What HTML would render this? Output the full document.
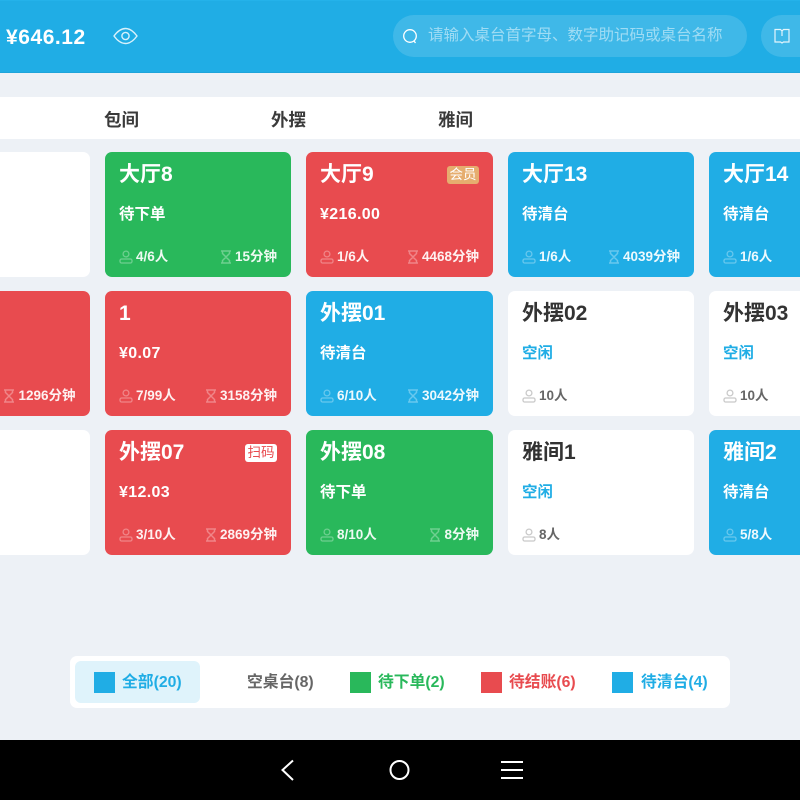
<!DOCTYPE html>
<html lang="zh">
<head>
<meta charset="utf-8">
<title>桌台</title>
<style>
html,body{margin:0;padding:0;background:#edf1f6}
body{width:800px;height:800px;overflow:hidden;position:relative;font-family:"Liberation Sans","Noto Sans CJK SC",sans-serif}
.abs{position:absolute;white-space:nowrap}
.hdr{left:0;top:0;width:800px;height:73px;background:#20ade5;border-bottom:1px solid #1ea4da;border-top:1px solid #24b2ea;box-sizing:border-box}
.pill{background:rgba(255,255,255,.14);border-radius:21px;height:42px;top:15px}
.tabs{left:0;top:97px;width:800px;height:42px;background:#fff}
.tab{top:98px;line-height:44px;font-size:17.500px;font-weight:bold;color:#3a3a3a}
.card{position:absolute;width:186px;height:125px;border-radius:7px;color:#fff;box-sizing:border-box;overflow:hidden}
.g{background:#29b85b}.r{background:#e84b4f}.b{background:#20ade5}
.w{background:#fff;color:#333}
.lc{left:0;width:89.500px;border-radius:0 7px 7px 0}
.rc{left:709px;width:91px;border-radius:7px 0 0 7px}
.c3{left:306px;width:187px}
.t{position:absolute;left:14px;top:8px;line-height:30px;font-size:21px;font-weight:bold;white-space:nowrap}
.s{position:absolute;left:14px;top:50px;line-height:25px;font-size:15.500px;font-weight:bold;white-space:nowrap}
.m{font-size:16px;letter-spacing:.35px}
.w .s{color:#20ade5}
.f{position:absolute;left:14px;right:14px;top:95px;height:20px;line-height:20px;font-size:13.500px;font-weight:bold;display:flex;justify-content:space-between;white-space:nowrap;color:rgba(255,255,255,.92)}
.w .f{color:#666}
.f span{display:inline-flex;align-items:center}
.f svg{margin-right:3px;opacity:.35}
.tag{position:absolute;right:14px;top:14px;height:18px;line-height:18px;width:32px;text-align:center;border-radius:3px;font-size:13.500px}
.leg{left:70px;top:656px;width:660px;height:52px;background:#fff;border-radius:7px}
.sq{top:672px;width:21px;height:21px}
.lt{top:670.500px;line-height:24px;font-size:15.800px;font-weight:bold}
.nav{left:0;top:740px;width:800px;height:60px;background:#000}
</style>
</head>
<body>
<svg width="0" height="0" style="position:absolute">
<symbol id="p" viewBox="0 0 14 14"><circle cx="7" cy="4" r="2.900" fill="none" stroke="currentColor" stroke-width="1.300"/><rect x="1" y="9" width="12" height="4" rx="1.600" fill="none" stroke="currentColor" stroke-width="1.300"/></symbol>
<symbol id="h" viewBox="0 0 12 14"><path d="M1 1h10M1 13h10M2.500 1v2.500L6 7l3.500-3.500V1M2.500 13v-2.500L6 7l3.500 3.500V13" fill="none" stroke="currentColor" stroke-width="1.500"/></symbol>
</svg>

<div class="abs hdr"></div>
<div class="abs" style="left:6px;top:24px;line-height:27px;font-size:21px;font-weight:bold;color:#fff;letter-spacing:.55px">¥646.12</div>
<svg class="abs" style="left:113px;top:27px" width="25" height="18" viewBox="0 0 25 18"><path d="M1 9C5 3.500 8.500 1.500 12.500 1.500S20 3.500 24 9c-4 5.500-7.500 7.500-11.500 7.500S5 14.500 1 9Z" fill="none" stroke="#d8f1fb" stroke-width="1.400"/><circle cx="12.500" cy="9" r="3.600" fill="none" stroke="#d8f1fb" stroke-width="1.400"/></svg>
<div class="abs pill" style="left:393px;width:354px"></div>
<svg class="abs" style="left:402px;top:28px" width="16" height="17" viewBox="0 0 16 17"><circle cx="8" cy="8" r="6.300" fill="none" stroke="#fff" stroke-width="1.300"/><path d="M12 13l1.500 2" stroke="#fff" stroke-width="1.300"/></svg>
<div class="abs" style="left:428px;top:23px;line-height:26px;font-size:15.500px;color:rgba(255,255,255,.5)">请输入桌台首字母、数字助记码或桌台名称</div>
<div class="abs pill" style="left:761px;width:39px;border-radius:21px 0 0 21px"></div>
<svg class="abs" style="left:774px;top:28px" width="16" height="16" viewBox="0 0 16 16"><path d="M1 1.500h5.500L8 3l1.500-1.500H15V14H9.500L8 15l-1.500-1H1Z M8 3v5" fill="none" stroke="#e3f5fc" stroke-width="1.200"/></svg>

<div class="abs tabs"></div>
<div class="abs tab" style="left:104px">包间</div>
<div class="abs tab" style="left:271px">外摆</div>
<div class="abs tab" style="left:438px">雅间</div>

<!-- row 1 -->
<div class="card w lc" style="top:152px"></div>
<div class="card g" style="left:105px;top:152px"><div class="t">大厅8</div><div class="s">待下单</div><div class="f"><span><svg width="14" height="14"><use href="#p"/></svg>4/6人</span><span><svg width="12" height="14"><use href="#h"/></svg>15分钟</span></div></div>
<div class="card r c3" style="top:152px"><div class="t">大厅9</div><div class="tag" style="background:#e6ad6f">会员</div><div class="s m">¥216.00</div><div class="f"><span><svg width="14" height="14"><use href="#p"/></svg>1/6人</span><span><svg width="12" height="14"><use href="#h"/></svg>4468分钟</span></div></div>
<div class="card b" style="left:508px;top:152px"><div class="t">大厅13</div><div class="s">待清台</div><div class="f"><span><svg width="14" height="14"><use href="#p"/></svg>1/6人</span><span><svg width="12" height="14"><use href="#h"/></svg>4039分钟</span></div></div>
<div class="card b rc" style="top:152px"><div class="t">大厅14</div><div class="s">待清台</div><div class="f"><span><svg width="14" height="14"><use href="#p"/></svg>1/6人</span></div></div>

<!-- row 2 -->
<div class="card r lc" style="top:291px"><div class="f" style="left:0;justify-content:flex-end"><span><svg width="12" height="14"><use href="#h"/></svg>1296分钟</span></div></div>
<div class="card r" style="left:105px;top:291px"><div class="t">1</div><div class="s m">¥0.07</div><div class="f"><span><svg width="14" height="14"><use href="#p"/></svg>7/99人</span><span><svg width="12" height="14"><use href="#h"/></svg>3158分钟</span></div></div>
<div class="card b c3" style="top:291px"><div class="t">外摆01</div><div class="s">待清台</div><div class="f"><span><svg width="14" height="14"><use href="#p"/></svg>6/10人</span><span><svg width="12" height="14"><use href="#h"/></svg>3042分钟</span></div></div>
<div class="card w" style="left:508px;top:291px"><div class="t">外摆02</div><div class="s">空闲</div><div class="f"><span><svg width="14" height="14"><use href="#p"/></svg>10人</span></div></div>
<div class="card w rc" style="top:291px"><div class="t">外摆03</div><div class="s">空闲</div><div class="f"><span><svg width="14" height="14"><use href="#p"/></svg>10人</span></div></div>

<!-- row 3 -->
<div class="card w lc" style="top:430px;height:124.500px"></div>
<div class="card r" style="left:105px;top:430px;height:124.500px"><div class="t">外摆07</div><div class="tag" style="background:#fff;color:#e84b4f">扫码</div><div class="s m">¥12.03</div><div class="f"><span><svg width="14" height="14"><use href="#p"/></svg>3/10人</span><span><svg width="12" height="14"><use href="#h"/></svg>2869分钟</span></div></div>
<div class="card g c3" style="top:430px;height:124.500px"><div class="t">外摆08</div><div class="s">待下单</div><div class="f"><span><svg width="14" height="14"><use href="#p"/></svg>8/10人</span><span><svg width="12" height="14"><use href="#h"/></svg>8分钟</span></div></div>
<div class="card w" style="left:508px;top:430px;height:124.500px"><div class="t">雅间1</div><div class="s">空闲</div><div class="f"><span><svg width="14" height="14"><use href="#p"/></svg>8人</span></div></div>
<div class="card b rc" style="top:430px;height:124.500px"><div class="t">雅间2</div><div class="s">待清台</div><div class="f"><span><svg width="14" height="14"><use href="#p"/></svg>5/8人</span></div></div>

<!-- legend -->
<div class="abs leg"></div>
<div class="abs" style="left:75px;top:661px;width:125px;height:42px;background:#dff3fb;border-radius:6px"></div>
<div class="abs sq" style="left:94px;background:#20ade5"></div>
<div class="abs lt" style="left:122px;color:#20ade5">全部(20)</div>
<div class="abs lt" style="left:247px;color:#666">空桌台(8)</div>
<div class="abs sq" style="left:350px;background:#29b85b"></div>
<div class="abs lt" style="left:378px;color:#29b85b">待下单(2)</div>
<div class="abs sq" style="left:481px;background:#e84b4f"></div>
<div class="abs lt" style="left:509px;color:#e84b4f">待结账(6)</div>
<div class="abs sq" style="left:612px;background:#20ade5"></div>
<div class="abs lt" style="left:641px;color:#20ade5">待清台(4)</div>

<!-- nav -->
<div class="abs nav"></div>
<svg class="abs" style="left:270px;top:750px" width="260" height="40" viewBox="270 750 260 40">
<path d="M293 760.500L282.500 770 293 780" fill="none" stroke="#fff" stroke-width="2"/>
<circle cx="399.500" cy="770" r="9" fill="none" stroke="#fff" stroke-width="2"/>
<path d="M501 762h22M501 770h22M501 778h22" stroke="#fff" stroke-width="2"/>
</svg>
</body>
</html>
